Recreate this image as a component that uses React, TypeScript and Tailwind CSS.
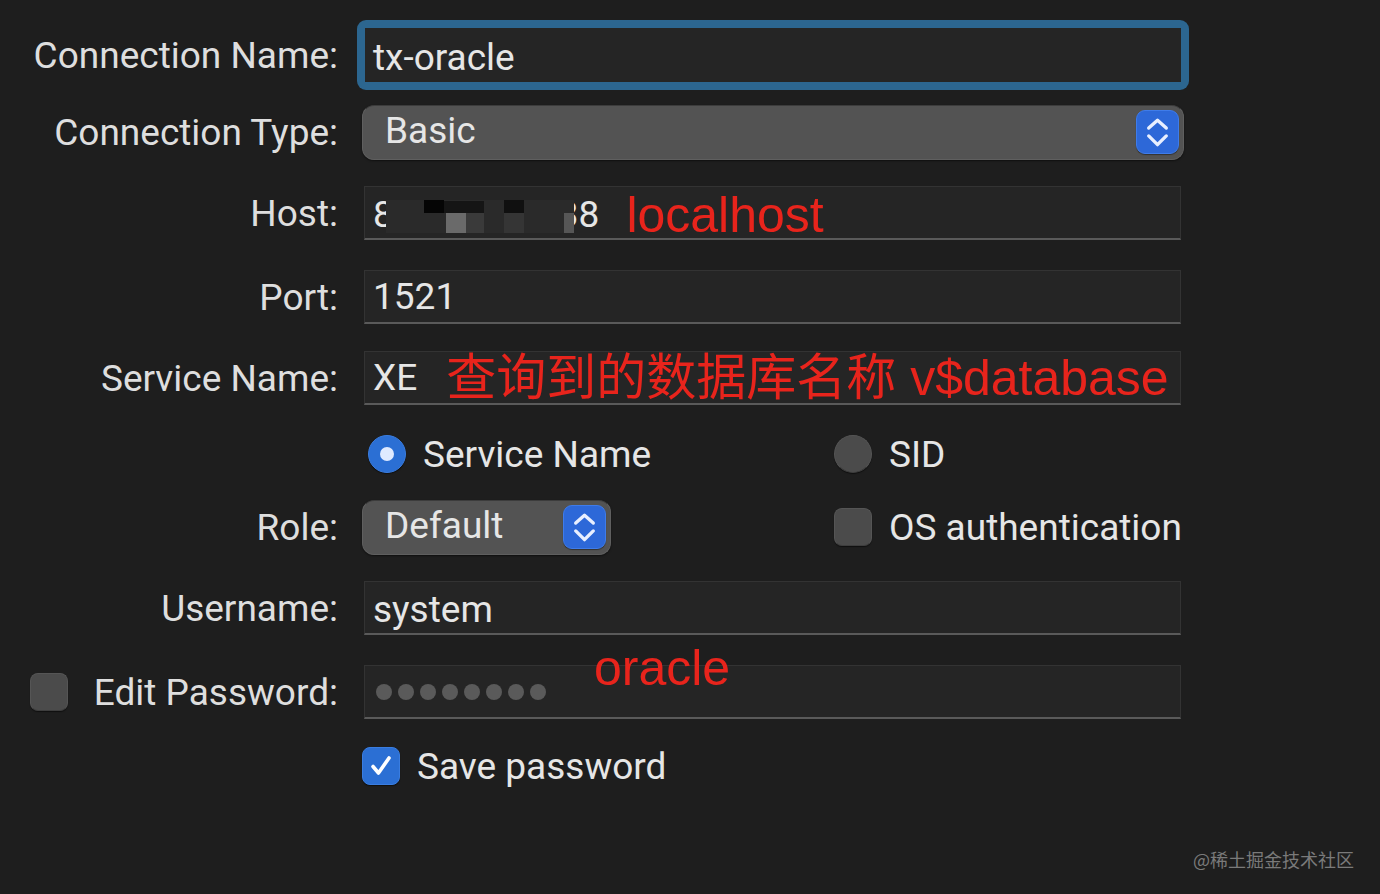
import React from 'react';

const labelCls =
  "w-[338px] shrink-0 text-right text-[37px] leading-none text-[#dedede]";
const valueCls = "text-[37px] leading-none text-[#e6e6e6]";
const redCls = "text-[50px] leading-none text-[#e8241c] font-['Liberation_Sans','Noto_Sans_CJK_SC',sans-serif]";

function Stepper() {
  return (
    <div className="w-[43px] h-[44px] rounded-[9px] bg-[#2d68d8] border border-[#3f7cea] flex items-center justify-center shadow-[0_1px_1px_rgba(0,0,0,0.4)]">
      <svg width="42" height="44" viewBox="0 0 42 44" fill="none">
        <path d="M12 18 L21 10 L30 18" stroke="#e8efff" strokeWidth="3.4" strokeLinecap="round" strokeLinejoin="round" />
        <path d="M12 26 L21 35 L30 26" stroke="#e8efff" strokeWidth="3.4" strokeLinecap="round" strokeLinejoin="round" />
      </svg>
    </div>
  );
}

function TextField({ children, className = "" }: { children?: React.ReactNode; className?: string }) {
  return (
    <div
      className={
        "relative w-[817px] h-[54px] bg-[#252525] border border-[#333333] border-b-[#5a5a5a] border-b-2 flex items-center pl-[8px] " +
        className
      }
    >
      {children}
    </div>
  );
}

function Popup({ value, width }: { value: string; width: string }) {
  return (
    <div
      className={
        width +
        " h-[55px] rounded-[12px] bg-[#535353] border border-[#5f5f5f] border-t-[#3c3c3c] flex items-center justify-between pl-[22px] pr-[4px] shadow-[0_1px_2px_rgba(0,0,0,0.5)]"
      }
    >
      <span className={valueCls + " -mt-[3px]"}>{value}</span>
      <Stepper />
    </div>
  );
}

function GrayBox({ round }: { round?: boolean }) {
  return (
    <div
      className={
        "w-[38px] h-[38px] bg-[#4b4b4b] border border-[#555555] border-b-[#3e3e3e] shadow-[0_1px_1px_rgba(0,0,0,0.5)] " +
        (round ? "rounded-full" : "rounded-[8px]")
      }
    />
  );
}

function Row({ h, children }: { h: string; children: React.ReactNode }) {
  return <div className={h + " flex items-center"}>{children}</div>;
}

export default function App() {
  return (
    <div className="w-[1380px] h-[894px] bg-[#1e1e1e] relative overflow-hidden font-['Roboto','Noto_Sans_CJK_SC',sans-serif]">
      <div className="flex flex-col pt-[16px]">
        {/* Connection Name */}
        <Row h="h-[78px]">
          <div className={labelCls}>Connection Name:</div>
          <div className="ml-[19px] w-[832px] h-[70px] rounded-[9px] bg-[#2c6690] p-[8px]">
            <div className="w-full h-full bg-[#252525] flex items-center pl-[8px] pt-[4px]">
              <span className={valueCls}>tx-oracle</span>
            </div>
          </div>
        </Row>

        {/* Connection Type */}
        <Row h="h-[76px]">
          <div className={labelCls}>Connection Type:</div>
          <div className="ml-[24px]">
            <Popup value="Basic" width="w-[822px]" />
          </div>
        </Row>

        {/* Host */}
        <Row h="h-[86px]">
          <div className={labelCls}>Host:</div>
          <div className="ml-[26px]">
            <TextField>
              <span className={valueCls + " mt-[4px]"}>8</span>
              <span className={valueCls + " ml-[164px] mt-[4px]"}>38</span>
              <span className={redCls + " ml-[27px] mt-[4px]"}>localhost</span>
              {/* mosaic */}
              <div className="absolute left-[21px] top-[13px] w-[188px] h-[33px] bg-[#2a2a2a]">
                <div className="absolute left-[38px] top-0 w-[20px] h-[13px] bg-[#050505]" />
                <div className="absolute left-[58px] top-[1px] w-[40px] h-[12px] bg-[#151515]" />
                <div className="absolute left-[60px] top-[13px] w-[20px] h-[20px] bg-[#6a6a6a]" />
                <div className="absolute left-[80px] top-[13px] w-[18px] h-[20px] bg-[#3a3a3a]" />
                <div className="absolute left-[118px] top-0 w-[20px] h-[13px] bg-[#101010]" />
                <div className="absolute left-[118px] top-[13px] w-[20px] h-[20px] bg-[#353535]" />
                <div className="absolute left-[178px] top-[13px] w-[10px] h-[20px] bg-[#565656]" />
              </div>
            </TextField>
          </div>
        </Row>

        {/* Port */}
        <Row h="h-[82px]">
          <div className={labelCls}>Port:</div>
          <div className="ml-[26px]">
            <TextField>
              <span className={valueCls}>1521</span>
            </TextField>
          </div>
        </Row>

        {/* Service Name */}
        <Row h="h-[80px]">
          <div className={labelCls}>Service Name:</div>
          <div className="ml-[26px]">
            <TextField>
              <span className={valueCls}>XE</span>
              <span className={redCls + " ml-[29px]"}>查询到的数据库名称 v$database</span>
            </TextField>
          </div>
        </Row>

        {/* Radios */}
        <Row h="h-[72px]">
          <div className="w-[338px] shrink-0" />
          <div className="ml-[30px] grid grid-cols-[466px_1fr] items-center">
            <div className="flex items-center gap-[17px]">
              <div className="w-[38px] h-[38px] rounded-full bg-[#2b6fd4] border border-[#3a7de0] flex items-center justify-center shadow-[0_1px_1px_rgba(0,0,0,0.5)]">
                <div className="w-[14px] h-[14px] rounded-full bg-[#dfeaff]" />
              </div>
              <span className={valueCls}>Service Name</span>
            </div>
            <div className="flex items-center gap-[17px]">
              <GrayBox round />
              <span className={valueCls}>SID</span>
            </div>
          </div>
        </Row>

        {/* Role */}
        <Row h="h-[74px]">
          <div className={labelCls}>Role:</div>
          <div className="ml-[24px] grid grid-cols-[472px_1fr] items-center">
            <Popup value="Default" width="w-[249px]" />
            <div className="flex items-center gap-[17px]">
              <GrayBox />
              <span className={valueCls}>OS authentication</span>
            </div>
          </div>
        </Row>

        {/* Username */}
        <Row h="h-[88px]">
          <div className={labelCls}>Username:</div>
          <div className="ml-[26px]">
            <TextField>
              <span className={valueCls + " mt-[4px]"}>system</span>
            </TextField>
          </div>
        </Row>

        {/* Edit Password */}
        <Row h="h-[80px]">
          <div className="w-[338px] shrink-0 flex items-center justify-between pl-[30px]">
            <GrayBox />
            <span className="text-[37px] leading-none text-[#dedede]">Edit Password:</span>
          </div>
          <div className="ml-[26px]">
            <TextField className="bg-[#222222] border-[#2c2c2c] border-b-[#3c3c3c]">
              <div className="flex items-center gap-[6px] pl-[3px]">
                {Array.from({ length: 8 }).map((_, i) => (
                  <div key={i} className="w-[16px] h-[16px] rounded-full bg-[#5a5a5a]" />
                ))}
              </div>
              <span className={redCls + " absolute left-[229px] top-[-23px]"}>oracle</span>
            </TextField>
          </div>
        </Row>

        {/* Save password */}
        <Row h="h-[68px]">
          <div className="w-[338px] shrink-0" />
          <div className="ml-[24px] flex items-center gap-[17px]">
            <div className="w-[38px] h-[38px] rounded-[8px] bg-[#2b6fd4] border border-[#3a7de0] flex items-center justify-center shadow-[0_1px_1px_rgba(0,0,0,0.5)]">
              <svg width="26" height="26" viewBox="0 0 26 26" fill="none">
                <path d="M5 13.5 L10.5 20 L21 5" stroke="#ffffff" strokeWidth="3.6" strokeLinecap="round" strokeLinejoin="round" />
              </svg>
            </div>
            <span className={valueCls}>Save password</span>
          </div>
        </Row>
      </div>

      {/* watermark */}
      <div className="absolute right-[26px] bottom-[26px] text-[18px] leading-none text-[#7a7a7a] font-['Noto_Sans_CJK_SC',sans-serif]">
        @稀土掘金技术社区
      </div>
    </div>
  );
}
